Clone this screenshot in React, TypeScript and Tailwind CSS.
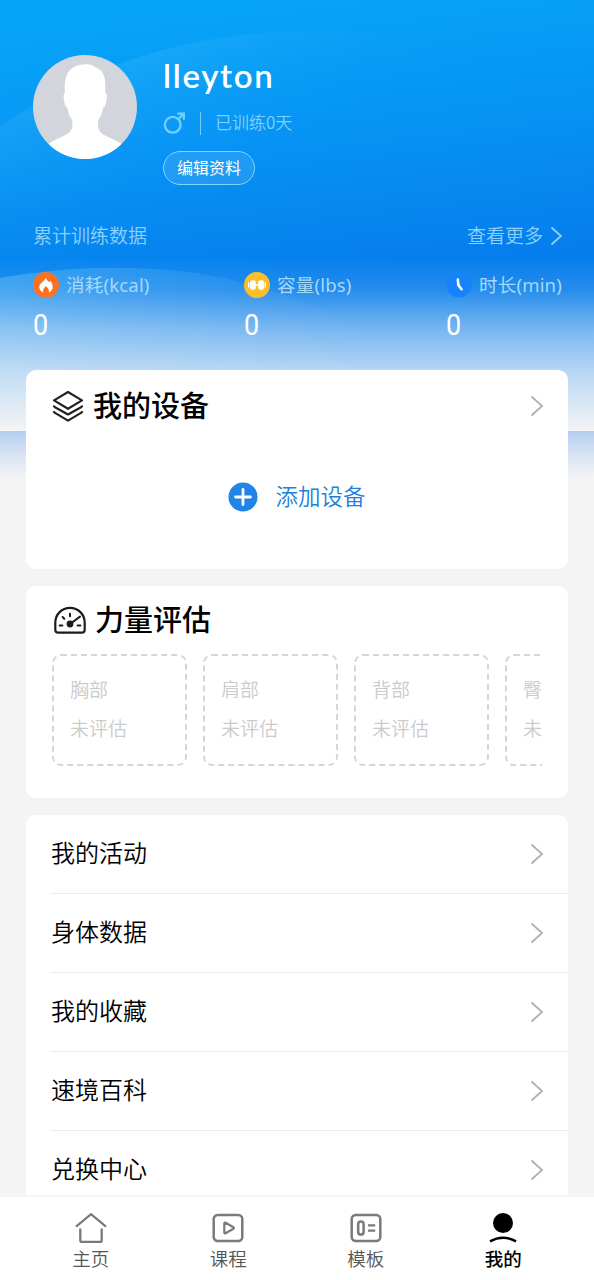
import type { ReactNode } from 'react';

interface Stat {
  label: string;
  value: string;
  icon: ReactNode;
}

interface Tab {
  label: string;
  icon: ReactNode;
  isActive: boolean;
}

const stats: Stat[] = [
  { label: '消耗(kcal)', value: '0', icon: <FlameIcon /> },
  { label: '容量(lbs)', value: '0', icon: <DumbbellIcon /> },
  { label: '时长(min)', value: '0', icon: <ClockIcon /> },
];

const bodyParts = ['胸部', '肩部', '背部', '臀部'];

const menuItems = ['我的活动', '身体数据', '我的收藏', '速境百科', '兑换中心'];

const tabs: Tab[] = [
  { label: '主页', icon: <HomeIcon />, isActive: false },
  { label: '课程', icon: <CourseIcon />, isActive: false },
  { label: '模板', icon: <TemplateIcon />, isActive: false },
  { label: '我的', icon: <ProfileIcon />, isActive: true },
];

function FlameIcon() {
  return (
    <svg viewBox="0 0 26 26" className="w-[26px] h-[26px]">
      <circle cx="13" cy="13" r="13" fill="#fa7322" />
      <path
        d="M12.6 5.200c.5 2.600 2.600 3.700 3.600 5.100.5-.5.7-1 .8-1.600 1.700 1.700 2.700 3.600 2.700 5.800 0 2.900-1.500 4.900-3.900 5.900.7-2 0-3.700-2.800-6.200-2.300 2-3.700 3.800-2.700 6.200-2.500-.9-4-2.900-4-5.600 0-3.800 5.900-5.100 6.300-9.600z"
        fill="#fff"
      />
    </svg>
  );
}

function DumbbellIcon() {
  return (
    <svg viewBox="0 0 26 26" className="w-[26px] h-[26px]">
      <circle cx="13" cy="13" r="13" fill="#fbbf2b" />
      <g fill="#fff">
        <rect x="6" y="8.200" width="5.800" height="9.600" rx="2.200" />
        <rect x="14.200" y="8.200" width="5.800" height="9.600" rx="2.200" />
        <rect x="4" y="10.200" width="1.400" height="5.600" rx=".7" />
        <rect x="20.600" y="10.200" width="1.400" height="5.600" rx=".7" />
        <rect x="11" y="12.200" width="4" height="1.600" />
      </g>
    </svg>
  );
}

function ClockIcon() {
  return (
    <svg viewBox="0 0 26 26" className="w-[26px] h-[26px]">
      <circle cx="13" cy="13" r="12.500" fill="#1683fb" />
      <path d="M11.800 7.500l.6 5.700 3.200 4" fill="none" stroke="#fff" strokeWidth="2.600" strokeLinecap="round" strokeLinejoin="round" />
    </svg>
  );
}

function HomeIcon() {
  return (
    <svg viewBox="0 0 32 32" className="w-8 h-8" fill="none" stroke="#7a7a7a" strokeWidth="2.300">
      <path d="M1 15.600L16 3.200l15 12.400" />
      <path d="M5.300 17.500v12q0 1.500 1.500 1.500h18.400q1.500 0 1.500-1.500v-12" />
    </svg>
  );
}

function CourseIcon() {
  return (
    <svg viewBox="0 0 32 32" className="w-8 h-8" fill="none" stroke="#7a7a7a" strokeWidth="2.500" strokeLinejoin="round">
      <rect x="1.700" y="4" width="28.600" height="26" rx="4" />
      <path d="M12.300 12.500q0-1.400 1.200-.7l8 4.500q1 .7 0 1.400l-8 4.500q-1.200.7-1.200-.7z" strokeWidth="2.200" />
    </svg>
  );
}

function TemplateIcon() {
  return (
    <svg viewBox="0 0 32 32" className="w-8 h-8" fill="none" stroke="#7a7a7a" strokeWidth="2.500">
      <rect x="1.700" y="4" width="28.600" height="26" rx="4" />
      <rect x="8.200" y="10.600" width="5.400" height="13" rx="2.700" />
      <path d="M18 14.400h7.200M18 19.600h7.200" strokeWidth="2.300" />
    </svg>
  );
}

function ProfileIcon() {
  return (
    <svg viewBox="0 0 32 32" className="w-8 h-8">
      <circle cx="16" cy="12" r="10" fill="#000" />
      <path d="M3 30.300Q16 23 29 30.300" fill="none" stroke="#000" strokeWidth="2.500" />
    </svg>
  );
}

function LayersIcon() {
  return (
    <svg viewBox="0 0 32 32" className="w-8 h-8" fill="none" stroke="#222" strokeWidth="2.200" strokeLinejoin="round" strokeLinecap="round">
      <path d="M16 2L30 10.400 16 18.800 2 10.400z" />
      <path d="M2 16.300l1 .9L16 24.500l13-7.300 1-.9" />
      <path d="M2 22l1 .9L16 30.600l13-7.700 1-.9" />
    </svg>
  );
}

function GaugeIcon() {
  return (
    <svg viewBox="0 0 32 28" className="w-8 h-7" fill="none" stroke="#1c1c1c" strokeWidth="2.200" strokeLinecap="round">
      <path d="M4.300 26.700h23.400q3 0 3-3v-7.200a14.700 14.700 0 0 0-29.400 0v7.200q0 3 3 3z" />
      <path d="M16 18L26 10.600M16 7.800v2.400M8.600 11l1.700 1.700M5.600 19.400h2.800M23.600 19.400h2.800" strokeWidth="2" />
      <circle cx="16" cy="18" r="3.400" fill="#1c1c1c" stroke="none" />
    </svg>
  );
}

function MaleIcon() {
  return (
    <svg viewBox="0 0 22 22" className="w-[22px] h-[22px]" fill="none" stroke="#74d0fb" strokeWidth="2.300">
      <circle cx="9.700" cy="12.800" r="7.900" />
      <path d="M15.200 7.300L20.200 2.300M14.200 1.600h6.700v6.200" />
    </svg>
  );
}

function Chevron() {
  return (
    <svg viewBox="0 0 14 24" className="w-[14px] h-6" fill="none" stroke="#b2b2b2" strokeWidth="1.900">
      <path d="M1.500 2.500L12 12 1.500 21.500" />
    </svg>
  );
}

function Avatar() {
  return (
    <svg viewBox="0 0 104 104" className="w-[104px] h-[104px] shrink-0">
      <defs>
        <clipPath id="avatar">
          <circle cx="52" cy="52" r="52" />
        </clipPath>
      </defs>
      <g clipPath="url(#avatar)">
        <rect width="104" height="104" fill="#d2d5db" />
        <path
          d="M32 38C30 18 38 10 52 9.200c5-.3 8 .8 10.500 3.400C71 15 73.500 24 72 38c2.500.3 2 5 1.200 9-.7 3.500-1.700 5.500-3.200 6-1 6-2.500 9-4.700 12-.9 9 .6 12 5.700 15 5.500 3 11 5 17 8.500V106H16V88.500C22 84.500 28 82.500 34 79c5-3 6-6 5.200-14-2.200-3-3.700-6-4.700-12-1.500-.5-2.600-2.500-3.200-6-.8-4-1.300-8.700.7-9z"
          fill="#fff"
        />
      </g>
    </svg>
  );
}

function Backdrop() {
  return (
    <svg viewBox="0 0 594 480" className="absolute top-0 left-0 w-[594px] h-[480px]">
      <defs>
        <linearGradient id="sky" gradientUnits="userSpaceOnUse" x1="280" y1="0" x2="314" y2="280">
          <stop offset="0" stopColor="#06a4f8" />
          <stop offset=".5" stopColor="#0693f4" />
          <stop offset="1" stopColor="#067dec" />
        </linearGradient>
        <linearGradient id="hill" gradientUnits="userSpaceOnUse" x1="150" y1="50" x2="215" y2="190">
          <stop offset="0" stopColor="#44bcf8" stopOpacity=".26" />
          <stop offset="1" stopColor="#0a8ef4" stopOpacity="0" />
        </linearGradient>
        <linearGradient id="wave" gradientUnits="userSpaceOnUse" x1="40" y1="0" x2="400" y2="50">
          <stop offset="0" stopColor="#64c0f6" stopOpacity=".42" />
          <stop offset="1" stopColor="#5cb4f3" stopOpacity="0" />
        </linearGradient>
        <linearGradient id="fade" x1="0" y1="0" x2="0" y2="1">
          <stop offset="0" stopColor="#f4f4f4" stopOpacity="0" />
          <stop offset=".18" stopColor="#f0f2f5" stopOpacity=".13" />
          <stop offset=".42" stopColor="#eef1f6" stopOpacity=".5" />
          <stop offset=".66" stopColor="#eff2f6" stopOpacity=".77" />
          <stop offset="1" stopColor="#f4f4f4" stopOpacity="1" />
        </linearGradient>
        <linearGradient id="tail" x1="0" y1="0" x2="0" y2="1">
          <stop offset="0" stopColor="#b4cdf0" />
          <stop offset=".5" stopColor="#d8e3f3" />
          <stop offset="1" stopColor="#f4f4f4" />
        </linearGradient>
      </defs>
      <rect width="594" height="431" fill="url(#sky)" />
      <path d="M0 127C92 61 200 31 312 31c120 0 220 35 282 80v320H0z" fill="url(#hill)" />
      <path d="M0 278C90 262 180 266 240 282c55 14 100 33 150 60v89H0z" fill="url(#wave)" />
      <rect y="258" width="594" height="173" fill="url(#fade)" />
      <rect y="431" width="594" height="47" fill="url(#tail)" />
    </svg>
  );
}

export default function App() {
  return (
    <div className="relative w-[594px] h-[1280px] overflow-hidden flex flex-col bg-[#f4f4f4] text-black font-['Noto_Sans','Noto_Sans_CJK_SC',sans-serif]">
      <Backdrop />

      <main className="relative flex-1 min-h-0 overflow-hidden">
        <header className="h-[370px] pt-[55px] pl-[33px] pr-8">
          <div className="flex gap-[26px]">
            <Avatar />
            <div className="flex flex-col items-start">
              <h1 className="h-10 text-white text-[33px] leading-10 font-semibold tracking-[1.700px] font-['Lato',sans-serif]">
                lleyton
              </h1>
              <div className="h-6 mt-4 flex items-center">
                <MaleIcon />
                <div className="w-px h-[23px] ml-[15px] mr-[14px] bg-[#70ccfb]" />
                <span className="h-[26px] text-[#7fd2fb] text-[17px] leading-6 font-[350] font-['Noto_Sans_CJK_SC',sans-serif]">已训练0天</span>
              </div>
              <button className="w-[92px] h-[34px] mt-4 rounded-full border border-[#7fd6fa] bg-white/10 text-white text-[16px] leading-[30px]">
                编辑资料
              </button>
            </div>
          </div>

          <div className="h-7 mt-[37px] flex items-center justify-between text-[#8cd2fb] text-[19px] leading-7 font-[350]">
            <span>累计训练数据</span>
            <span className="flex items-center gap-[7px]">
              查看更多
              <svg viewBox="0 0 12 20" className="w-3 h-5" fill="none" stroke="currentColor" strokeWidth="1.800">
                <path d="M1.500 1.500L11 10 1.500 18.500" />
              </svg>
            </span>
          </div>

          <div className="mt-[21px] flex justify-between">
            {stats.map((stat) => (
              <div key={stat.label}>
                <div className="h-[28px] flex items-center gap-[7px]">
                  {stat.icon}
                  <span className="text-[#a5d9fa] text-[18.500px] leading-7 tracking-[0.200px]">{stat.label}</span>
                </div>
                <div className="h-8 mt-[10px] origin-left scale-x-90 text-white text-[30px] leading-8 font-[450] font-['Roboto',sans-serif]">
                  {stat.value}
                </div>
              </div>
            ))}
          </div>
        </header>

        <div className="flex flex-col gap-[17px] px-[26px]">
          <section className="h-[199px] rounded-[10px] bg-white">
            <div className="h-[72px] pl-[26px] pr-6 flex items-center">
              <LayersIcon />
              <h2 className="flex-1 ml-[9px] text-[29px] leading-9 font-medium">我的设备</h2>
              <Chevron />
            </div>
            <div className="h-[110px] flex items-center justify-center gap-[17px]">
              <svg viewBox="0 0 30 30" className="w-[30px] h-[30px]">
                <circle cx="15" cy="15" r="14.500" fill="#2184e8" />
                <path d="M15 7.500v15M7.500 15h15" stroke="#fff" strokeWidth="2.800" strokeLinecap="round" />
              </svg>
              <span className="text-[#2180dd] text-[22.500px] leading-8 font-[350]">添加设备</span>
            </div>
          </section>

          <section className="h-[212px] rounded-[10px] bg-white px-[26px]">
            <div className="h-[68px] pl-[2px] flex items-center">
              <GaugeIcon />
              <h2 className="ml-[9px] text-[29px] leading-9 font-medium">力量评估</h2>
            </div>
            <div className="flex gap-4 overflow-hidden">
              {bodyParts.map((part) => (
                <div
                  key={part}
                  className="w-[135px] h-[112px] shrink-0 rounded-[9px] border-2 border-dashed border-[#d6d6d6] pl-4 pt-[15px] text-[#cbcbcb] text-[19px] font-[350]"
                >
                  <p className="h-[39px] leading-[39px]">{part}</p>
                  <p className="h-[39px] leading-[39px]">未评估</p>
                </div>
              ))}
            </div>
          </section>

          <section className="h-[420px] rounded-[10px] bg-white pl-6">
            {menuItems.map((item) => (
              <div key={item} className="h-[79px] pr-6 flex items-center justify-between border-b border-[#ececec]">
                <span className="pl-[1px] pb-[2px] text-[24px] leading-8 font-[350]">{item}</span>
                <Chevron />
              </div>
            ))}
          </section>
        </div>
      </main>

      <nav className="relative h-[85px] shrink-0 border-t-2 border-[#f4f4f4] bg-white flex px-[22px] pt-[14px]">
        {tabs.map((tab) => (
          <div key={tab.label} className="flex-1 flex flex-col items-center">
            {tab.icon}
            <span className={`mt-[3px] text-[18.500px] leading-[26px] ${tab.isActive ? 'text-black font-medium' : 'text-[#555] font-[350]'}`}>
              {tab.label}
            </span>
          </div>
        ))}
      </nav>
    </div>
  );
}
